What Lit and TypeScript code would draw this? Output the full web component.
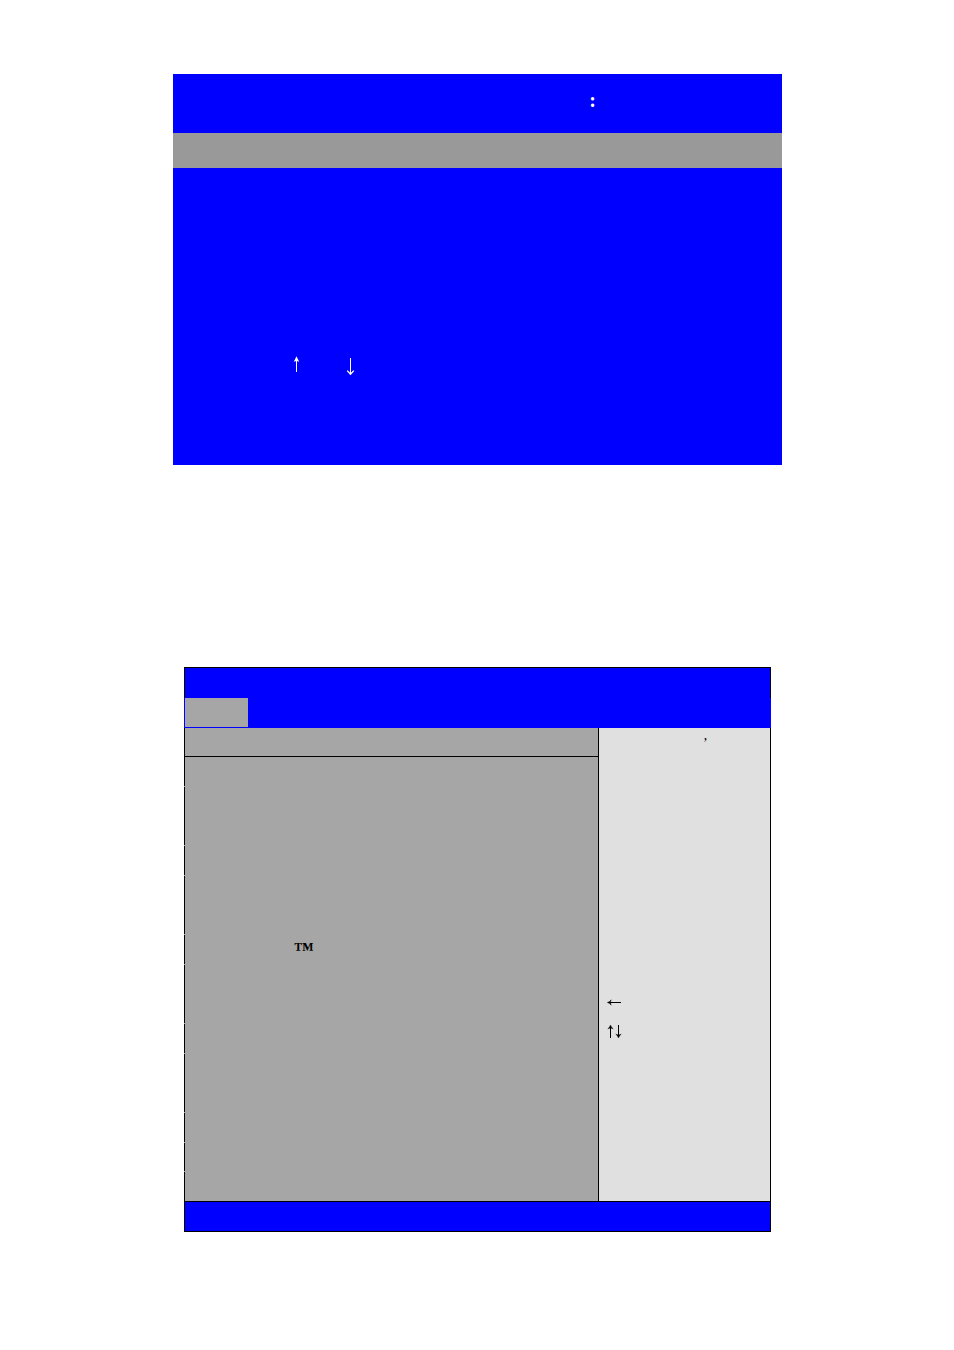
import { LitElement, html, css } from "lit";
import { customElement } from "lit/decorators.js";

@customElement("boot-menu")
class BootMenu extends LitElement {
  static styles = css`
    :host { display: block; background: #0000ff; color: #ffffff; }
    .title {
      height: 59px;
      box-sizing: border-box;
      padding: 14px 186px 0 0;
      text-align: right;
      font: bold 20px/24px "Liberation Serif", serif;
    }
    .selected { height: 35px; background: #999999; }
    .options { height: 184px; }
    .hint {
      display: flex;
      gap: 45px;
      height: 113px;
      box-sizing: border-box;
      padding: 4px 0 0 119px;
    }
    svg { display: block; fill: none; stroke: currentColor; }
  `;

  render() {
    return html`
      <header class="title">:</header>
      <div class="selected"></div>
      <div class="options"></div>
      <footer class="hint">
        <svg width="9" height="20" viewBox="0 0 9 20" role="img" aria-label="Up">
          <path d="M4.5 16V4" /><path d="M4.5 0.2L7.2 5.8L4.5 5L1.8 5.8Z" fill="currentColor" stroke="none" />
        </svg>
        <svg width="9" height="20" viewBox="0 0 9 20" role="img" aria-label="Down">
          <path d="M4.5 2V18.5" /><path d="M1.2 14.6L4.5 18.2L7.8 14.6" stroke-width="1.4" />
        </svg>
      </footer>
    `;
  }
}

@customElement("setup-screen")
class SetupScreen extends LitElement {
  static styles = css`
    :host {
      display: block;
      color: #000000;
      font: 20px/28px "Liberation Serif", serif;
    }
    .title {
      height: 31px;
      box-sizing: border-box;
      background: #0000ff;
      border: 1px solid #000000;
      border-bottom: 0;
    }
    .tabs {
      height: 30px;
      box-sizing: border-box;
      padding: 0 0 1px 1px;
      background: #0000ff;
    }
    .tab { width: 63px; height: 29px; background: #a6a6a6; }
    .body { display: grid; grid-template-columns: 1fr 173px; }
    .heading {
      height: 29px;
      box-sizing: border-box;
      background: #a6a6a6;
      border-left: 1px solid #000000;
      border-bottom: 1px solid #000000;
    }
    .items { display: grid; gap: 1px; background: #a6a6a6; }
    .item { height: 29px; border-left: 1px solid #000000; }
    .short { height: 28px; }
    .double { height: 58px; }
    .name { padding-left: 109px; font-weight: bold; }
    .help {
      box-sizing: border-box;
      padding-left: 8px;
      background: #e0e0e0;
      border: 1px solid #000000;
      border-width: 0 1px;
    }
    .description {
      height: 256px;
      padding: 4px 0 0 96px;
      font-size: 14px;
      line-height: 24px;
    }
    .keys { display: flex; align-items: center; height: 29px; }
    svg { display: block; fill: none; stroke: currentColor; }
    .footer { height: 31px; box-sizing: border-box; background: #0000ff; border: 1px solid #000000; }
  `;

  private rows = [
    { size: "" },
    { size: "double" },
    { size: "" },
    { size: "double" },
    { size: "", name: "™" },
    { size: "double" },
    { size: "" },
    { size: "double" },
    { size: "" },
    { size: "short" },
    { size: "" },
  ];

  render() {
    return html`
      <header class="title"></header>
      <nav class="tabs"><div class="tab"></div></nav>
      <div class="body">
        <section>
          <div class="heading"></div>
          <div class="items">
            ${this.rows.map(
              (row) => html`<div class="item ${row.size}">
                ${row.name ? html`<div class="name">${row.name}</div>` : ""}
              </div>`
            )}
          </div>
        </section>
        <aside class="help">
          <div class="description">’</div>
          <div class="keys">
            <svg width="15" height="9" viewBox="0 0 15 9" role="img" aria-label="Left">
              <path d="M14 4.5H2" />
              <path d="M0.3 4.5Q3 3.8 4.2 1.8L3.4 4.5L4.2 7.2Q3 5.2 0.3 4.5Z" fill="currentColor" stroke-width="0.4" />
            </svg>
          </div>
          <div class="keys">
            <svg width="15" height="15" viewBox="0 0 15 15" role="img" aria-label="Up and down">
              <path d="M3.5 14V3M11.5 1V12" />
              <path
                d="M3.5 1Q4.2 3.4 6.2 4.8L3.5 4L0.8 4.8Q2.8 3.4 3.5 1ZM11.5 14Q12.2 11.6 14.2 10.2L11.5 11L8.8 10.2Q10.8 11.6 11.5 14Z"
                fill="currentColor"
                stroke-width="0.4"
              />
            </svg>
          </div>
        </aside>
      </div>
      <footer class="footer"></footer>
    `;
  }
}

@customElement("app-root")
class AppRoot extends LitElement {
  static styles = css`
    :host { display: block; background: #ffffff; }
    .page { padding: 74px 172px 118px 173px; }
    .setup { margin: 202px 11px 0; }
  `;

  render() {
    return html`
      <main class="page">
        <boot-menu></boot-menu>
        <setup-screen class="setup"></setup-screen>
      </main>
    `;
  }
}
